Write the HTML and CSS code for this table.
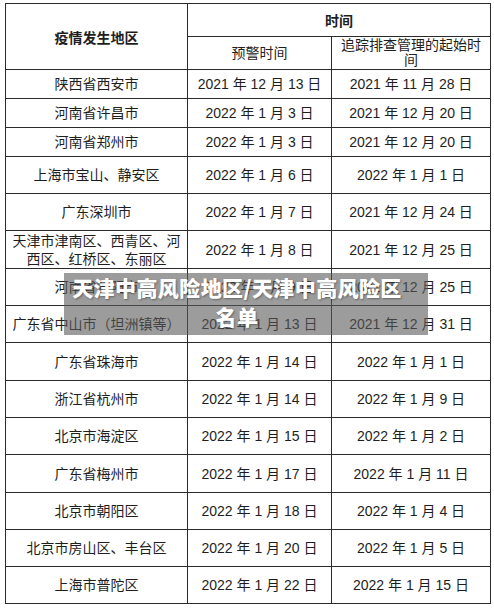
FILE: index.html
```html
<!DOCTYPE html>
<html lang="zh-CN">
<head>
<meta charset="utf-8">
<link rel="stylesheet" href="styles.css">
</head>
<body>
<div class="page">
<table class="risk">
  <colgroup><col class="c1"><col class="c2"><col class="c3"></colgroup>
  <thead>
    <tr class="h1"><th rowspan="2">疫情发生地区</th><th colspan="2">时间</th></tr>
    <tr class="h2"><td>预警时间</td><td>追踪排查管理的起始时间</td></tr>
  </thead>
  <tbody>
    <tr class="s"><td>陕西省西安市</td><td>2021 年 12 月 13 日</td><td>2021 年 11 月 28 日</td></tr>
    <tr class="s"><td>河南省许昌市</td><td>2022 年 1 月 3 日</td><td>2021 年 12 月 20 日</td></tr>
    <tr class="s"><td>河南省郑州市</td><td>2022 年 1 月 3 日</td><td>2021 年 12 月 20 日</td></tr>
    <tr class="m"><td>上海市宝山、静安区</td><td>2022 年 1 月 6 日</td><td>2022 年 1 月 1 日</td></tr>
    <tr class="m"><td>广东深圳市</td><td>2022 年 1 月 7 日</td><td>2021 年 12 月 24 日</td></tr>
    <tr class="l"><td>天津市津南区、西青区、河西区、红桥区、东丽区</td><td>2022 年 1 月 8 日</td><td>2021 年 12 月 25 日</td></tr>
    <tr class="m"><td>河南省安阳市</td><td>2022 年 1 月 9 日</td><td>2021 年 12 月 25 日</td></tr>
    <tr class="m"><td class="nw">广东省中山市（坦洲镇等）</td><td>2022 年 1 月 13 日</td><td>2021 年 12 月 31 日</td></tr>
    <tr class="l"><td>广东省珠海市</td><td>2022 年 1 月 14 日</td><td>2022 年 1 月 1 日</td></tr>
    <tr class="m"><td>浙江省杭州市</td><td>2022 年 1 月 14 日</td><td>2022 年 1 月 9 日</td></tr>
    <tr class="m"><td>北京市海淀区</td><td>2022 年 1 月 15 日</td><td>2022 年 1 月 2 日</td></tr>
    <tr class="l"><td>广东省梅州市</td><td>2022 年 1 月 17 日</td><td>2022 年 1 月 11 日</td></tr>
    <tr class="m"><td>北京市朝阳区</td><td>2022 年 1 月 18 日</td><td>2022 年 1 月 4 日</td></tr>
    <tr class="m"><td>北京市房山区、丰台区</td><td>2022 年 1 月 20 日</td><td>2022 年 1 月 5 日</td></tr>
    <tr class="m"><td>上海市普陀区</td><td>2022 年 1 月 22 日</td><td>2022 年 1 月 15 日</td></tr>
  </tbody>
</table>
<div class="caption"><span class="line">天津中高风险地区/天津中高风险区</span><span class="line">名单</span></div>
</div>
</body>
</html>
```
FILE: styles.css
```css
html, body {
  margin: 0;
  padding: 0;
  background: #ffffff;
}
.page {
  position: relative;
  width: 494px;
  height: 610px;
  padding: 3px 0 0 5px;
  box-sizing: border-box;
}
.risk {
  border-collapse: collapse;
  table-layout: fixed;
  width: 485px;
  font-family: "Liberation Sans", "Noto Sans CJK SC", sans-serif;
  font-size: 14px;
  color: #1e1e1e;
}
.c1 { width: 182px; }
.c2 { width: 144px; }
.c3 { width: 159px; }
.risk th, .risk td {
  border: 1px solid #2a2a2a;
  padding: 0 4px;
  text-align: center;
  vertical-align: middle;
  line-height: 18px;
  font-weight: normal;
}
.risk th {
  font-family: "Noto Sans CJK SC", sans-serif;
  font-weight: 700;
}
.h1 { height: 33px; }
.h2 { height: 33px; }
.h2 td { line-height: 15px; padding: 0 6px; }
.s { height: 29px; }
.m { height: 37px; }
.l { height: 38px; }
.nw { white-space: nowrap; padding: 0 2px; }
.caption {
  position: absolute;
  left: 64px;
  top: 273px;
  width: 364px;
  height: 62px;
  box-sizing: border-box;
  padding: 0 18px 0 0;
  background: rgba(90, 90, 90, 0.6);
  color: #ffffff;
  font-family: "Noto Sans CJK SC", sans-serif;
  font-weight: 900;
  font-size: 21px;
  letter-spacing: 0.4px;
  line-height: 29px;
  text-align: center;
  text-shadow: 1px 1px 2px rgba(0, 0, 0, 0.35);
}
.caption .line {
  display: block;
  white-space: nowrap;
}
```
